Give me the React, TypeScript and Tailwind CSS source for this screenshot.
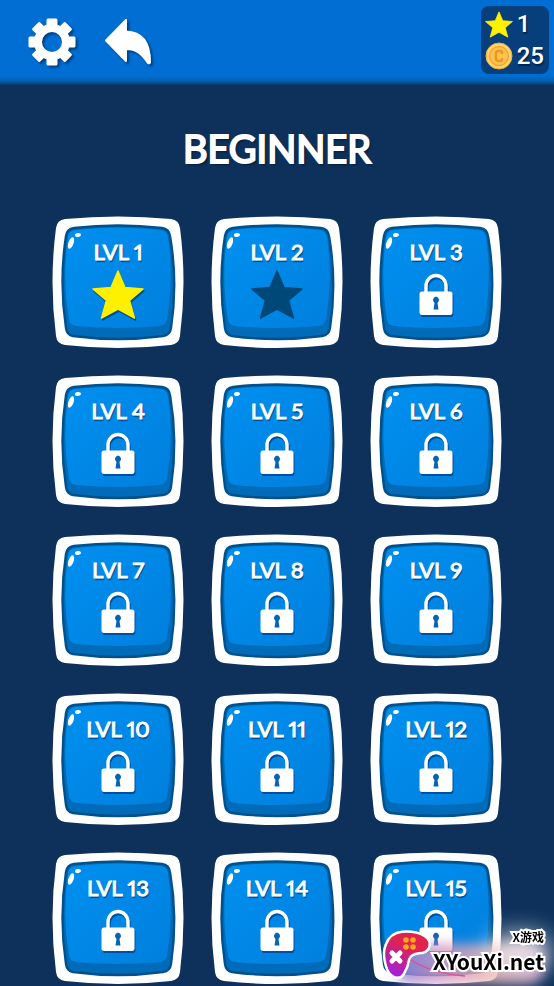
import { useId } from "react";

type Estado = "superado" | "disponible" | "bloqueado";

// Niveles del pack principiante
const NIVELES: { numero: number; estado: Estado }[] = Array.from(
  { length: 15 },
  (_, i) => ({
    numero: i + 1,
    estado: i === 0 ? "superado" : i === 1 ? "disponible" : "bloqueado",
  }),
);

const ESTRELLA =
  "M26 1 L33 17.5 L51 19 L37.5 30.5 L42.5 48 L26 39 L9.5 48 L14.5 30.5 L1 19 L19 17.5 Z";

/** Estrella rellena con currentColor */
function Estrella({ className }: { className: string }) {
  return (
    <svg viewBox="0 0 52 49" className={className} aria-hidden="true">
      <path
        d={ESTRELLA}
        fill="currentColor"
        stroke="currentColor"
        strokeWidth="1.5"
        strokeLinejoin="round"
      />
    </svg>
  );
}

function Candado() {
  return (
    <svg
      viewBox="0 0 34 41"
      className="h-[41px] w-[34px] overflow-visible drop-shadow-[1px_2px_0px_#00509f]"
      aria-hidden="true"
    >
      <path
        d="M7 19 V12 A10 10.500 0 0 1 27 12 V19"
        fill="none"
        stroke="#fff"
        strokeWidth="3.400"
      />
      <path
        fill="#fff"
        d="M3 17.500 H31 Q33.500 17.500 33.500 20 V38 Q33.500 41 31 41 H3 Q0.500 41 0.500 38 V20 Q0.500 17.500 3 17.500 Z"
      />
      <path
        d="M17 22.500 A3.600 3.600 0 0 0 15.500 29 L14.500 35.500 H19.500 L18.500 29 A3.600 3.600 0 0 0 17 22.500 Z"
        fill="#0763b4"
      />
    </svg>
  );
}

/** Marco blanco abombado con la cara azul y el brillo de la esquina */
function FondoFicha() {
  const id = useId();
  return (
    <svg
      viewBox="0 0 132 132"
      className="absolute inset-0 size-full"
      aria-hidden="true"
    >
      <defs>
        <linearGradient id={id} x1="0" y1="0" x2="1" y2="1">
          <stop offset="0" stopColor="#0090f0" />
          <stop offset="1" stopColor="#007fdd" />
        </linearGradient>
      </defs>
      <path
        d="M13 3 Q66 -2 119 3 Q127 4 128 12 Q135 66 128 120 Q127 128 119 129 Q66 135 13 129 Q5 128 4 120 Q-3 66 4 12 Q5 4 13 3 Z"
        fill="#fff"
      />
      <path
        d="M22 12 Q66 7 110 12 Q117 13 118 20 Q126 66 119 112 Q118 119 111 120 Q66 126 21 120 Q15 119 14 112 Q7 66 14 20 Q15 13 22 12 Z"
        fill="#006bb8"
        stroke="#00508c"
        strokeWidth="2.400"
      />
      <path
        d="M23 14 Q66 9 109 14 Q115 15 116 21 Q122 62 115 104 Q114 109 108 110 Q66 114 24 110 Q18 109 17 104 Q10 62 16 21 Q17 15 23 14 Z"
        fill={`url(#${id})`}
      />
      <ellipse cx="19" cy="27" rx="2.600" ry="6" fill="#fff" transform="rotate(19 19 27)" />
      <ellipse cx="26" cy="19" rx="3" ry="1.900" fill="#fff" transform="rotate(-8 26 19)" />
    </svg>
  );
}

function Ficha({ numero, estado }: { numero: number; estado: Estado }) {
  return (
    <button
      type="button"
      disabled={estado === "bloqueado"}
      className="relative aspect-square w-full"
    >
      <FondoFicha />
      <span className="relative flex h-full flex-col items-center pt-6">
        <span className="text-[22px] leading-6 text-white proportional-nums [-webkit-text-stroke:1px_white] [text-shadow:1px_2px_1px_#004a8c]">
          LVL {numero}
        </span>
        {estado === "superado" && (
          <Estrella className="mt-1.5 h-[49px] w-[52px] text-[#fff000] drop-shadow-[1px_2px_0px_#00508c]" />
        )}
        {estado === "disponible" && (
          <Estrella className="mt-1.5 h-[49px] w-[52px] text-[#004878]" />
        )}
        {estado === "bloqueado" && (
          <span className="mt-2.5">
            <Candado />
          </span>
        )}
      </span>
    </button>
  );
}

function Engranaje() {
  const dientes = [0, 45, 90, 135, 180, 225, 270, 315];
  return (
    <svg viewBox="0 0 48 48" className="size-12 drop-shadow-[2px_2px_1px_#003f80]" aria-hidden="true">
      <circle cx="24" cy="24" r="14" fill="none" stroke="#fff" strokeWidth="8" />
      {dientes.map((giro) => (
        <rect
          key={giro}
          x="18.500"
          y="0.500"
          width="11"
          height="9"
          rx="1.500"
          fill="#fff"
          transform={`rotate(${giro} 24 24)`}
        />
      ))}
    </svg>
  );
}

function Volver() {
  return (
    <svg viewBox="0 0 48 48" className="size-12 drop-shadow-[2px_2px_1px_#003f80]" aria-hidden="true">
      <path
        d="M22 2 V13.500 C39 14 46 26 46 44 Q46 46 44 45 C38 36 33 31 22 31 V43 L2 22.500 Z"
        fill="#fff"
        stroke="#fff"
        strokeWidth="2"
        strokeLinejoin="round"
      />
    </svg>
  );
}

function Moneda() {
  return (
    <svg viewBox="0 0 28 28" className="size-7" aria-hidden="true">
      <circle cx="14" cy="14" r="13" fill="#ffd66b" stroke="#f2a93b" strokeWidth="1" />
      <circle cx="14" cy="14" r="9.500" fill="#fbc24c" stroke="#f3a838" strokeWidth="1.500" />
      <path
        d="M17 12 V10 L16 9 H12.500 L11 10.500 V17.500 L12.500 19 H16 L17 18 V16"
        fill="none"
        stroke="#e9982c"
        strokeWidth="2.500"
      />
    </svg>
  );
}

/** Sello del sitio en la esquina inferior derecha */
function Sello() {
  return (
    <div className="pointer-events-none fixed right-2.5 bottom-1.5 flex items-end">
      <div className="absolute top-4 right-0 -bottom-1 left-3 rounded-2xl bg-[linear-gradient(90deg,#8f7fd8,#d79ac0,#e6b3ae,#d9a0cf)] opacity-85 blur-[6px]" />
      <div className="absolute top-1 -right-2 h-10 w-16 rounded-full bg-white opacity-70 blur-md" />
      <svg viewBox="0 0 50 50" className="relative size-[50px] overflow-visible" aria-hidden="true">
        <defs>
          <linearGradient id="mando" x1="0.700" y1="0" x2="0.200" y2="1">
            <stop offset="0.300" stopColor="#e0224e" />
            <stop offset="1" stopColor="#a01fe0" />
          </linearGradient>
        </defs>
        <path d="M27 29 Q46 43 82 46" fill="none" stroke="#dd4f9c" strokeWidth="1.500" />
        <path
          d="M4 15 Q8 4 19 3 Q32 2 41 7 Q47 11 45 17 Q43 22 36 22 Q27 23 25 29 Q24 36 20 43 Q16 49 10 45 Q5 42 3 31 Q1 22 4 15 Z"
          fill="url(#mando)"
          stroke="#fff"
          strokeWidth="5"
          paintOrder="stroke"
        />
        <path d="M9 23 L17 31 M17 23 L9 31" stroke="#fff" strokeWidth="5" strokeLinecap="round" />
        <g fill="#ffa51f">
          <circle cx="23" cy="10" r="2.800" />
          <circle cx="30" cy="10" r="2.800" />
          <circle cx="23" cy="17" r="2.800" />
          <circle cx="30" cy="17" r="2.800" />
        </g>
      </svg>
      <div className="relative flex flex-col items-end pb-1 font-['Noto_Sans_CJK_SC',sans-serif] font-bold text-black [-webkit-text-stroke:4px_white] [paint-order:stroke_fill] [stroke-linejoin:round]">
        <span className="text-xs leading-[18px]">X游戏</span>
        <span className="text-[21px] leading-[30px]">XYouXi.net</span>
      </div>
    </div>
  );
}

export default function App() {
  return (
    <div className="min-h-screen bg-[#0d315b] font-[Lato,sans-serif]">
      {/* Barra superior: ajustes, volver y marcador */}
      <header className="flex min-h-[85px] items-start justify-between bg-[linear-gradient(to_top,#07386b_0px,#075fae_4px,#006ed2_9px)] pt-1.5 pr-[5px] pl-7">
        <div className="flex gap-7 pt-3">
          <button type="button" aria-label="Settings">
            <Engranaje />
          </button>
          <button type="button" aria-label="Back">
            <Volver />
          </button>
        </div>
        <div className="flex flex-col rounded-lg bg-[#063f7b] py-0.5 pr-[5px] pl-1 font-[Roboto,sans-serif] text-2xl leading-8 font-medium text-white [text-shadow:1px_2px_1px_#00254d]">
          <span className="flex items-center gap-1">
            <Estrella className="h-[27px] w-7 text-[#fff000]" />1
          </span>
          <span className="flex items-center gap-1">
            <Moneda />
            25
          </span>
        </div>
      </header>

      <main className="mx-auto max-w-[554px] px-[52px] pt-9">
        <h1 className="text-center text-[38px] leading-[55px] text-white [-webkit-text-stroke:2px_white] [stroke-linejoin:round] [text-shadow:2px_2px_2px_#061c38]">
          BEGINNER
        </h1>
        <div className="mt-10 grid grid-cols-3 gap-[27px]">
          {NIVELES.map((nivel) => (
            <Ficha key={nivel.numero} {...nivel} />
          ))}
        </div>
      </main>

      <Sello />
    </div>
  );
}
